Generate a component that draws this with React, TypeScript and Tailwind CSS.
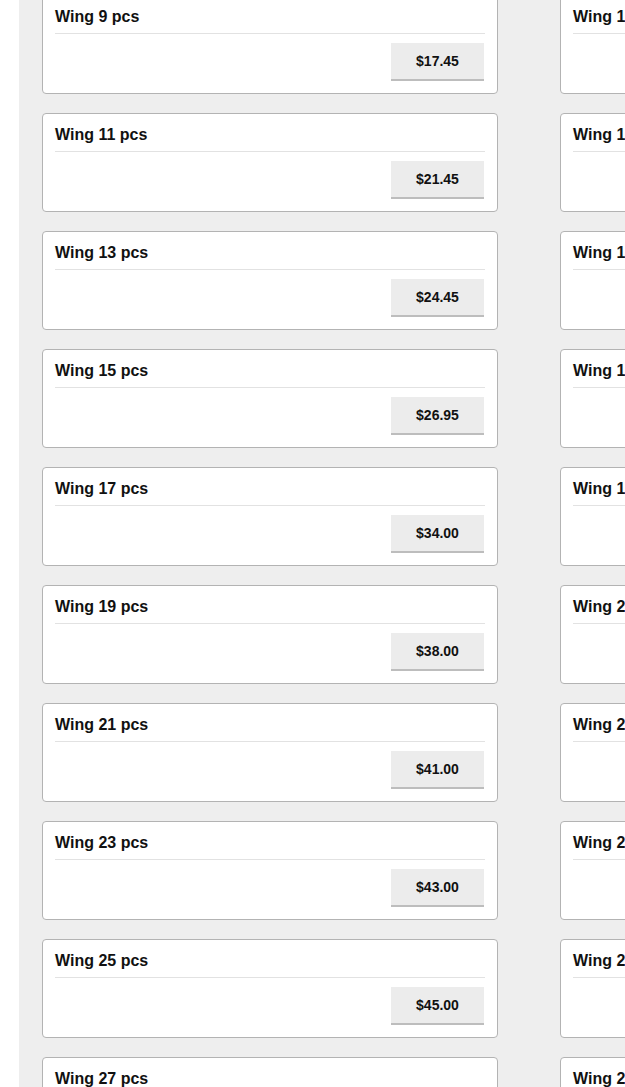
const left = [
  { n: 9, price: "$17.45" },
  { n: 11, price: "$21.45" },
  { n: 13, price: "$24.45" },
  { n: 15, price: "$26.95" },
  { n: 17, price: "$34.00" },
  { n: 19, price: "$38.00" },
  { n: 21, price: "$41.00" },
  { n: 23, price: "$43.00" },
  { n: 25, price: "$45.00" },
  { n: 27, price: "$47.00" },
];

const right = [
  { n: 10, price: "$19.45" },
  { n: 12, price: "$22.95" },
  { n: 14, price: "$25.45" },
  { n: 16, price: "$29.95" },
  { n: 18, price: "$36.00" },
  { n: 20, price: "$39.50" },
  { n: 22, price: "$42.00" },
  { n: 24, price: "$44.00" },
  { n: 26, price: "$46.00" },
  { n: 28, price: "$48.00" },
];

function WingCard({ n, price }: { n: number; price: string }) {
  return (
    <div className="w-[456px] shrink-0 bg-white border border-[#b3b3b3] rounded-[4px] px-3 pt-[11px] pb-[12px]">
      <h3 className="text-[16px] leading-[20px] font-bold text-[#111] whitespace-nowrap">Wing {n} pcs</h3>
      <div className="mt-[6px] border-t border-[#e2e2e2]" />
      <div className="mt-[9px] flex justify-end pr-[1px]">
        <button className="w-[93px] h-[38px] bg-[#ececec] border-b-2 border-[#bdbdbd] text-[14px] font-bold text-[#111]">
          {price}
        </button>
      </div>
    </div>
  );
}

export default function App() {
  return (
    <div className="h-[1087px] overflow-hidden bg-white pl-[19px]" style={{ fontFamily: '"Liberation Sans", Arial, sans-serif' }}>
      <div className="h-full bg-[#eeeeee] pl-[23px] overflow-hidden">
        <div className="-mt-[5px] flex flex-col gap-[19px]">
          {left.map((item, i) => (
            <div key={item.n} className="flex gap-[62px]">
              <WingCard n={item.n} price={item.price} />
              <WingCard n={right[i].n} price={right[i].price} />
            </div>
          ))}
        </div>
      </div>
    </div>
  );
}
